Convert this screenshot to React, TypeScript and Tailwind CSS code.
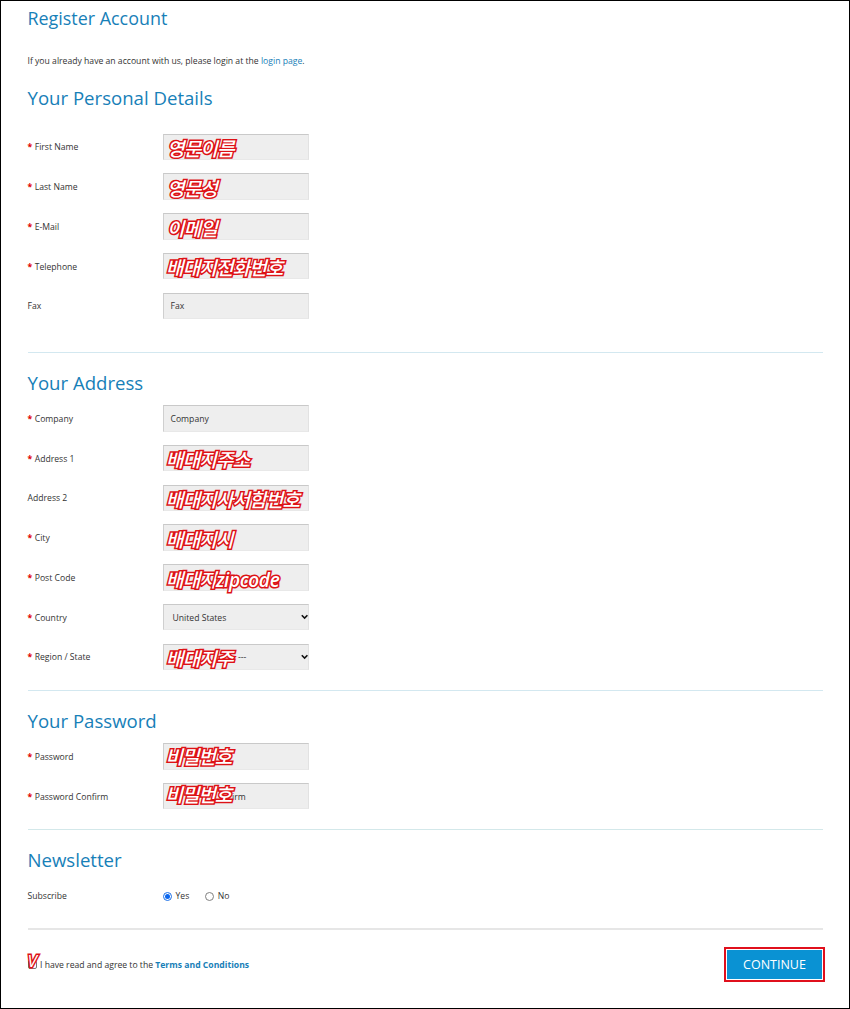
import React, { useState } from "react";
import clsx from "clsx";

type FieldProps = {
  label: string;
  required?: boolean;
  value?: string;
  note?: React.ReactNode;
  noteClass?: string;
  valueClass?: string;
  select?: boolean;
};

const Note = ({ text, className }: { text: React.ReactNode; className: string }) => (
  <span
    className={clsx(
      "absolute whitespace-nowrap font-['Open_Sans','Noto_Sans_CJK_KR',sans-serif] leading-[26px] font-medium italic text-white [-webkit-text-stroke:3px_#dd1216] [paint-order:stroke_fill]",
      className
    )}
  >
    {text}
  </span>
);

const Field = ({
  label,
  required = true,
  value,
  note,
  noteClass = "left-[2px] top-[1.5px]",
  valueClass = "pl-[6.5px]",
  select,
}: FieldProps) => (
  <div className="flex h-[26.5px] items-center">
    <label className="w-[135.5px] shrink-0 pt-px">
      {required && <span className="mr-[2.5px] font-bold text-[#e00000]">*</span>}
      {label}
    </label>
    <div className="relative flex h-[26.5px] w-[146px] items-center justify-between border border-t-[#c9c9c9] border-l-[#cfcfcf] border-r-[#e2e2e2] border-b-[#e8e8e8] bg-[#eeeeee]">
      <span className={clsx("pt-px", valueClass)}>{value}</span>
      {select && (
        <svg width="8" height="6" viewBox="0 0 8 6" fill="none" stroke="#111" strokeWidth="1.6">
          <path d="M1.8 1.2 L4.6 4 L7.4 1.2" />
        </svg>
      )}
      {note && <Note text={note} className={clsx("text-[19px] tracking-[-0.85px]", noteClass)} />}
    </div>
  </div>
);

const Heading = ({ children, className = "" }: { children: React.ReactNode; className?: string }) => (
  <h2 className={clsx("h-[30px] text-[18.6px] leading-[29px] text-[#1780b8]", className)}>{children}</h2>
);

const Radio = ({ checked, label, onClick }: { checked: boolean; label: string; onClick: () => void }) => (
  <label className="flex items-center gap-[3.5px]" onClick={onClick}>
    <span
      className={clsx(
        "flex size-[9px] items-center justify-center rounded-full border bg-white",
        checked ? "border-[#1a6fe8]" : "border-[#808080]"
      )}
    >
      {checked && <span className="size-[5px] rounded-full bg-[#0b66ee]" />}
    </span>
    {label}
  </label>
);

export default function App() {
  const [subscribe, setSubscribe] = useState(true);

  return (
    <div className="flex h-[1009px] w-[850px] flex-col border border-black bg-white px-[26.5px] font-['Open_Sans',sans-serif] text-[8.65px] leading-5 text-[#333]">
      <h1 className="h-[34px] text-[17.9px] leading-[34px] text-[#1780b8]">Register Account</h1>
      <p className="mt-4 h-5">
        If you already have an account with us, please login at the <a className="text-[#1780b8]">login page</a>.
      </p>

      <Heading className="mt-3">Your Personal Details</Heading>
      <div className="mt-[20.5px] flex flex-col gap-[13.25px]">
        <Field label="First Name" note="영문이름" noteClass="left-[3px] top-px" />
        <Field label="Last Name" note="영문성" noteClass="left-[3px] top-[1.5px]" />
        <Field label="E-Mail" note="이메일" noteClass="left-[3px] top-[1.5px]" />
        <Field label="Telephone" note="배대지전화번호" noteClass="left-[2px] top-px" />
        <Field label="Fax" required={false} value="Fax" />
      </div>
      <div className="mt-[33px] h-px shrink-0 bg-[#d3e8f0]" />

      <Heading className="mt-[15px]">Your Address</Heading>
      <div className="mt-[7px] flex flex-col gap-[13.25px]">
        <Field label="Company" value="Company" />
        <Field label="Address 1" note="배대지주소" />
        <Field label="Address 2" required={false} note="배대지사서함번호" />
        <Field label="City" note="배대지시" />
        <Field
          label="Post Code"
          note={
            <>
              배대지<span className="font-semibold tracking-[-0.35px]">zipcode</span>
            </>
          }
        />
        <Field label="Country" value="United States" valueClass="pl-[8.5px]" select />
        <Field label="Region / State" value="---" valueClass="pl-[74px]" note="배대지주" noteClass="left-[2px] top-px" select />
      </div>
      <div className="mt-5 h-px shrink-0 bg-[#d3e8f0]" />

      <Heading className="mt-[15px]">Your Password</Heading>
      <div className="mt-[7px] flex flex-col gap-[13.25px]">
        <Field label="Password" note="비밀번호" noteClass="left-[1.5px] top-0 tracking-[-1.1px]" />
        <Field
          label="Password Confirm"
          value="irm"
          valueClass="pl-[68px]"
          note="비밀번호"
          noteClass="left-[1.5px] top-[-1.5px] tracking-[-1.1px]"
        />
      </div>
      <div className="mt-[19.75px] h-px shrink-0 bg-[#d3e8ea]" />

      <Heading className="mt-[15px]">Newsletter</Heading>
      <div className="mt-[11px] flex h-5 items-center">
        <span className="w-[135.5px]">Subscribe</span>
        <div className="flex gap-4">
          <Radio label="Yes" checked={subscribe} onClick={() => setSubscribe(true)} />
          <Radio label="No" checked={!subscribe} onClick={() => setSubscribe(false)} />
        </div>
      </div>
      <div className="mt-[22px] h-[2px] shrink-0 bg-[#e6e6e6]" />

      <div className="mt-[17px] flex h-[35px] items-center justify-between">
        <div className="flex items-center">
          <span className="relative mr-[3.5px] size-[9px] rounded-[2px] border border-[#777] bg-white">
            <Note text="V" className="left-[-1px] top-[-13px] text-[17px]" />
          </span>
          <span className="pt-px">
            I have read and agree to the <b className="text-[#1780b8]">Terms and Conditions</b>
          </span>
        </div>
        <div className="-mr-[2.5px] h-[35px] w-[101px] border-2 border-[#e0101c] p-px">
          <button className="h-full w-full bg-[#0a92d3] text-[12.5px] text-white">CONTINUE</button>
        </div>
      </div>
    </div>
  );
}
